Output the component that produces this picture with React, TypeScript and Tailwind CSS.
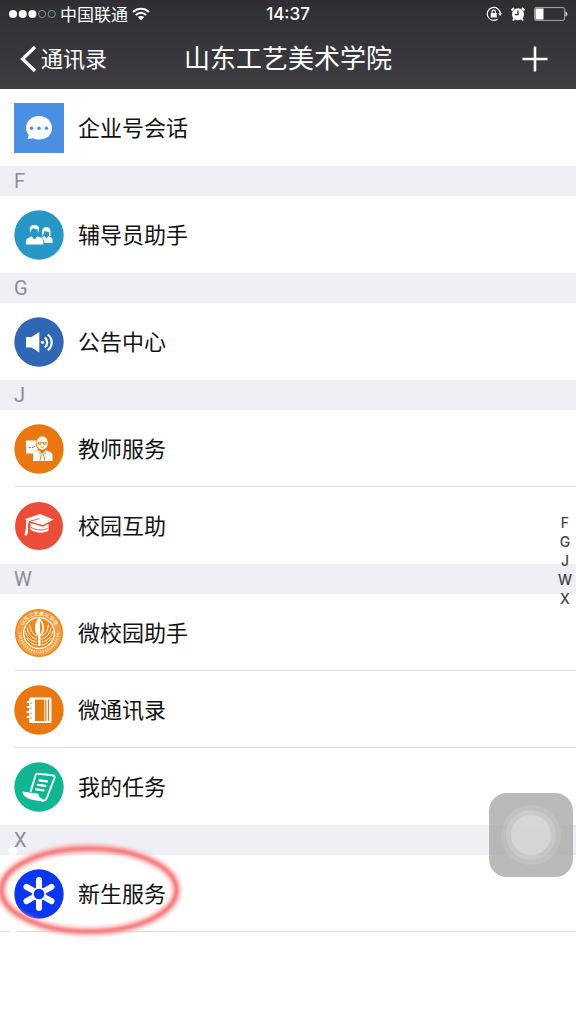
import type { ReactNode } from "react";

type Contact = {
  name: string;
  icon: ReactNode;
  highlighted?: boolean;
};

type Group = {
  letter?: string;
  contacts: Contact[];
};

const ChatIcon = () => (
  <svg viewBox="0 0 50 50" className="size-full" aria-hidden="true">
    <rect width="50" height="50" fill="#4a8fe2" />
    <path
      d="M25 13C32.5 13 38 18 38 25S32.5 36.500 25 36.500C22.500 36.500 20.500 36 18.800 35.200L13.500 36.300L14.800 32C13 30.200 12 27.800 12 25C12 18 17.500 13 25 13Z"
      fill="#fff"
    />
    <circle cx="17.500" cy="25.300" r="1.700" fill="#4a8fe2" />
    <circle cx="25" cy="25.300" r="1.700" fill="#4a8fe2" />
    <circle cx="32.500" cy="25.300" r="1.700" fill="#4a8fe2" />
  </svg>
);

const PeopleIcon = () => (
  <svg viewBox="0 0 50 50" className="size-full" aria-hidden="true">
    <circle cx="25" cy="25" r="24.700" fill="#2797c7" />
    <path
      d="M16 21C15 17.500 16.500 15 20.500 15C24.500 15 26 17.500 24.700 21L23.800 23V19.300C21.500 19.300 20 18.800 18.800 18.300C17.500 19 17 20 17 22.500Z"
      fill="#fff"
    />
    <path
      d="M12 34.500V31C12 28.500 15.500 27.800 17.500 26.300L20.500 29.500L23.500 26.300C26 27.500 29 28.300 29.300 31V34.500Z"
      fill="#fff"
    />
    <path
      d="M28 26V21.500C28 18.500 30 17 32.300 17C34.800 17 36.500 18.500 36.500 21.500V26H35V22C33 22 31.500 21.500 30.500 20.800C30.300 22 30 24.500 28 26Z"
      fill="#fff"
    />
    <path
      d="M26.800 27.500C28 27 29.500 26.800 30.300 26L32.500 28.500L34.700 26C36.500 27 38.500 27.500 38.500 30V33H30.500C30.500 30 29.300 28.500 26.800 27.500Z"
      fill="#fff"
    />
  </svg>
);

const SpeakerIcon = () => (
  <svg viewBox="0 0 50 50" className="size-full" aria-hidden="true">
    <circle cx="25" cy="25" r="24.700" fill="#2f67b4" />
    <path d="M12 20H17.500L25.300 15V35.500L17.500 30.500H12Z" fill="#fff" />
    <circle cx="28.500" cy="25.300" r="1.600" fill="#fff" />
    <path
      d="M30.800 20.300C34 23 34 28 30.800 30.500M33.800 17.500C39 22 39 29 33.800 33.300"
      fill="none"
      stroke="#fff"
      strokeWidth="2.200"
    />
  </svg>
);

const TeacherIcon = () => (
  <svg viewBox="0 0 50 50" className="size-full" aria-hidden="true">
    <circle cx="25" cy="25" r="24.700" fill="#ea7812" />
    <path d="M12 16.500H22.500L22 22L24 25L20 29.500H12Z" fill="#fff" />
    <path d="M14.500 23.500H17M18 23.500H19.500L21 22" fill="none" stroke="#ea7812" />
    <ellipse cx="28.300" cy="19" rx="5.600" ry="6.700" fill="#fff" />
    <path
      d="M23.700 18.700H33M24.500 18.700V20.300H27V18.700M29.500 18.700V20.300H32V18.700M26.500 23H30"
      fill="none"
      stroke="#ea7812"
      strokeWidth="0.900"
    />
    <path
      d="M19 37V31C19 28 22.500 27.500 24.500 26L28.300 30L32 26C34.500 27.500 38.500 28 38.500 31.500V37Z"
      fill="#fff"
    />
    <path
      d="M25 28.500L27.300 30.500L26 36.500M31.800 28.500L29.500 30.500L30.800 36.500"
      fill="none"
      stroke="#ea7812"
      strokeWidth="0.900"
    />
  </svg>
);

const CapIcon = () => (
  <svg viewBox="0 0 50 50" className="size-full" aria-hidden="true">
    <circle cx="25" cy="25" r="24" fill="#ec4d38" />
    <path d="M11 18L26 13L39.500 18.500L29 24L24 22.800L13.500 19.500Z" fill="#fff" />
    <path d="M25.500 17.500L15 20.500" stroke="#ec4d38" strokeWidth="0.900" />
    <path
      d="M12.300 19L15 20L13.700 24.500C14.700 28 13.800 31.500 13 34.500L10.500 34.200C11 31 12.300 28 12 24.500Z"
      fill="#fff"
    />
    <path
      d="M16.500 22L29 25.800L34.500 22.800V29.500C31 32.500 21 32.500 16.500 28.500Z"
      fill="#fff"
    />
    <path d="M17 26C21 29.500 30 30 34 27" fill="none" stroke="#ec4d38" strokeWidth="0.900" />
  </svg>
);

const CollegeLogo = () => (
  <svg viewBox="0 0 50 50" className="size-full" aria-hidden="true">
    <defs>
      <path id="seal-top" d="M7.500 25A17.500 17.500 0 0 1 42.500 25" />
    </defs>
    <circle cx="25" cy="25" r="23.300" fill="#f3a044" stroke="#ee8419" strokeWidth="1.400" />
    <path
      d="M6 25A19 19 0 0 0 44 25"
      fill="none"
      stroke="#fde3c4"
      strokeWidth="2.600"
      strokeDasharray="1.100 1.300"
    />
    <text fontSize="5" fill="#fff" fontFamily="Noto Sans CJK SC, sans-serif">
      <textPath href="#seal-top" startOffset="50%" textAnchor="middle">
        山东工艺美术学院
      </textPath>
    </text>
    <circle cx="25" cy="25" r="16" fill="#fff" />
    <circle cx="25" cy="25" r="14.700" fill="#f0871b" />
    <path
      d="M11 23C13 30 17 33 23 34M13 19.500C14.500 27 18 30 23 31M15.500 16.500C17 23.500 19 26.500 23 28M12.500 30C16 35 19 36.500 23 37M39 23C37 30 33 33 27.500 34M37 19.500C35.500 27 32 30 27.500 31M34.500 16.500C33.500 23.500 31 26.500 27.500 28M37.500 30C34 35 31.500 36.500 27.500 37"
      fill="none"
      stroke="#fff"
      strokeWidth="1"
    />
    <path d="M25 10C19.500 14 20 25 24 28V38H26.500V28C31.500 25 31.500 14 25 10Z" fill="#fff" />
    <path d="M26 13C29.300 16.500 29 23 26 26.500Z" fill="#f0871b" />
  </svg>
);

const NotebookIcon = () => (
  <svg viewBox="0 0 50 50" className="size-full" aria-hidden="true">
    <circle cx="25" cy="25" r="24.700" fill="#ea7812" />
    <rect x="15" y="12.500" width="22.500" height="25.500" rx="1.500" fill="#fff" />
    <rect x="21" y="14.500" width="9.300" height="21.500" fill="#ea7812" />
    <path d="M31.800 14.500V36M34.500 14.500V36" stroke="#ea7812" strokeWidth="1.200" />
    <path d="M15.500 17.500H18M15.500 22.500H18M15.500 27.500H18M15.500 32.500H18" stroke="#ea7812" strokeWidth="1.800" />
    <path
      d="M13.500 17H17M13.500 22H17M13.500 27H17M13.500 32H17"
      stroke="#fff"
      strokeWidth="1.800"
      strokeLinecap="round"
    />
  </svg>
);

const ScrollIcon = () => (
  <svg viewBox="0 0 50 50" className="size-full" aria-hidden="true">
    <circle cx="25" cy="25" r="24.700" fill="#10b694" />
    <path
      d="M16.500 30L21.500 13.500C22 12 22.700 11.500 24 11.700L38.500 13.200C40.500 13.500 41 14.500 40.500 16L33 35.500C32 38 30.500 39.300 27.500 38.500"
      fill="none"
      stroke="#fff"
      strokeWidth="1.900"
    />
    <path
      d="M8.500 29.500C14 30.500 19 31.300 24.500 31.800C24 34 25 35.500 28 36.500L29.500 39.500C21 38.500 14.500 37.300 11.500 35C9.500 33.500 8.500 31.500 8.500 29.500Z"
      fill="#fff"
    />
    <path
      d="M25.500 18.300L33 19.300M23.800 22.800L31.300 23.800M22 27.300L29.500 28.300"
      stroke="#fff"
      strokeWidth="2.200"
      strokeLinecap="round"
    />
  </svg>
);

const FlowerIcon = () => (
  <svg viewBox="0 0 50 50" className="size-full" aria-hidden="true">
    <circle cx="25" cy="25" r="24.700" fill="#0a37f0" />
    <path
      d="M25 11V18M25 32V39M12.500 17.800L19 21.500M31 28.500L37.500 32.200M12.500 32.200L19 28.500M31 21.500L37.500 17.800"
      stroke="#fff"
      strokeWidth="6"
      strokeLinecap="round"
    />
    <circle cx="25" cy="25" r="7" fill="#fff" />
    <circle cx="25" cy="25" r="5.300" fill="#0a37f0" />
  </svg>
);

const groups: Group[] = [
  { contacts: [{ name: "企业号会话", icon: <ChatIcon /> }] },
  { letter: "F", contacts: [{ name: "辅导员助手", icon: <PeopleIcon /> }] },
  { letter: "G", contacts: [{ name: "公告中心", icon: <SpeakerIcon /> }] },
  {
    letter: "J",
    contacts: [
      { name: "教师服务", icon: <TeacherIcon /> },
      { name: "校园互助", icon: <CapIcon /> },
    ],
  },
  {
    letter: "W",
    contacts: [
      { name: "微校园助手", icon: <CollegeLogo /> },
      { name: "微通讯录", icon: <NotebookIcon /> },
      { name: "我的任务", icon: <ScrollIcon /> },
    ],
  },
  { letter: "X", contacts: [{ name: "新生服务", icon: <FlowerIcon />, highlighted: true }] },
];

const StatusBar = () => (
  <div className="grid h-7 grid-cols-[1fr_auto_1fr] items-center px-2">
    <div className="flex items-center gap-1">
      <svg viewBox="0 0 48 10" className="h-[10px] w-12" aria-hidden="true">
        <circle cx="5" cy="5" r="4" fill="#fff" />
        <circle cx="14.700" cy="5" r="4" fill="#fff" />
        <circle cx="24.400" cy="5" r="4" fill="#fff" />
        <circle cx="34.100" cy="5" r="3.600" fill="none" stroke="#a5a5a8" strokeWidth="0.800" />
        <circle cx="43.800" cy="5" r="3.600" fill="none" stroke="#a5a5a8" strokeWidth="0.800" />
      </svg>
      <span className="text-[17px] leading-7">中国联通</span>
      <svg viewBox="0 0 18 14" className="h-[14px] w-[18px]" aria-hidden="true">
        <path
          d="M1 5C5.500 0.700 12.500 0.700 17 5M3.800 8C7 5.200 11 5.200 14.200 8"
          fill="none"
          stroke="#fff"
          strokeWidth="1.900"
        />
        <path d="M5.800 10C7.700 8.500 10.300 8.500 12.200 10L9 13.300Z" fill="#fff" />
      </svg>
    </div>
    <time className="font-[Inter,sans-serif] text-[17px] leading-7 font-medium">14:37</time>
    <div className="flex items-center justify-end gap-2">
      <svg viewBox="0 0 16 16" className="size-4" aria-hidden="true">
        <path
          d="M14.300 7.500A6.500 6.500 0 1 0 11.500 13.300"
          fill="none"
          stroke="#fff"
          strokeWidth="1.200"
        />
        <path d="M12 7.300H16L14.200 10Z" fill="#fff" />
        <rect x="4.700" y="7" width="6" height="4.500" fill="#fff" />
        <path d="M6 7.500V5.800A1.700 1.700 0 0 1 9.400 5.800V7.500" fill="none" stroke="#fff" strokeWidth="1.100" />
      </svg>
      <svg viewBox="0 0 16 16" className="size-4" aria-hidden="true">
        <circle cx="8" cy="8.300" r="6" fill="#fff" />
        <path d="M1.500 4.500L4 2M14.500 4.500L12 2M4.300 12.500L3 14.500M11.700 12.500L13 14.500" stroke="#fff" strokeWidth="1.900" />
        <path d="M8 4.500V8.700H5" fill="none" stroke="#323237" strokeWidth="1.300" />
      </svg>
      <svg viewBox="0 0 34 14" className="h-[14px] w-[34px]" aria-hidden="true">
        <rect x="0.600" y="0.600" width="30" height="12.800" rx="1.500" fill="none" stroke="#aaaaad" strokeWidth="1" />
        <rect x="1.500" y="1.500" width="8" height="11" fill="#fff" />
        <path d="M31.500 4.500C34 5 34 9 31.500 9.500Z" fill="#ddd" />
      </svg>
    </div>
  </div>
);

const ContactRow = ({ contact, last }: { contact: Contact; last: boolean }) => (
  <li className="relative">
    <a href="#" className="flex h-[77px] items-center pl-[14px]">
      <span className="size-[50px] shrink-0">{contact.icon}</span>
      <span className="flex-1 pb-1 pl-[14px] text-[22px] leading-8 text-[#111]">
        {contact.name}
      </span>
    </a>
    {!last && <div className="absolute right-0 bottom-0 left-[14px] h-px bg-[#e3e3e6]" />}
    {contact.highlighted && (
      <>
        <div className="absolute right-0 bottom-0 left-0 h-px bg-[#dcdcdf]" />
        <svg
          viewBox="0 0 190 100"
          className="pointer-events-none absolute -top-3 left-0 h-[100px] w-[190px] overflow-visible"
          aria-hidden="true"
        >
          <defs>
            <filter id="glow" x="-20%" y="-20%" width="140%" height="140%">
              <feGaussianBlur stdDeviation="2" />
            </filter>
            <filter id="core" x="-20%" y="-20%" width="140%" height="140%">
              <feGaussianBlur stdDeviation="0.800" />
            </filter>
          </defs>
          <circle cx="13" cy="8" r="4" fill="#fff" />
          <circle cx="13" cy="88" r="4" fill="#fff" />
          <ellipse
            cx="89"
            cy="47"
            rx="87.500"
            ry="41.500"
            fill="none"
            stroke="#fb9292"
            strokeWidth="7"
            filter="url(#glow)"
          />
          <ellipse
            cx="89"
            cy="47"
            rx="87.500"
            ry="41.500"
            fill="none"
            stroke="#f07070"
            strokeOpacity="0.800"
            strokeWidth="2.500"
            filter="url(#core)"
          />
        </svg>
      </>
    )}
  </li>
);

export default function App() {
  return (
    <div className="relative min-h-screen overflow-hidden bg-white font-['Noto_Sans_CJK_SC',sans-serif]">
      <header className="bg-linear-to-b from-[#2e2e33] to-[#3d3d42] text-white">
        <StatusBar />
        <div className="grid h-[61px] grid-cols-[1fr_auto_1fr] items-center px-5">
          <button type="button" className="flex items-center gap-1 justify-self-start">
            <svg viewBox="0 0 17 28" className="h-7 w-[17px]" aria-hidden="true">
              <path d="M15 2L2.500 14L15 26" fill="none" stroke="#fff" strokeWidth="3.200" />
            </svg>
            <span className="pb-1 text-[22px] leading-8">通讯录</span>
          </button>
          <h1 className="pb-1 text-[26px] leading-9 font-normal">山东工艺美术学院</h1>
          <button type="button" aria-label="添加" className="justify-self-end pr-2">
            <svg viewBox="0 0 26 26" className="size-[26px]" aria-hidden="true">
              <path d="M13 0.500V25.500M0.500 13H25.500" stroke="#fff" strokeWidth="2.600" />
            </svg>
          </button>
        </div>
      </header>

      <main>
        {groups.map((group) => (
          <section key={group.letter ?? "top"} id={group.letter}>
            {group.letter && (
              <h2 className="h-[30px] bg-[#efeff5] pl-[14px] font-[Roboto,sans-serif] text-[20px] leading-[30px] font-normal text-[#8e8e93]">
                {group.letter}
              </h2>
            )}
            <ul>
              {group.contacts.map((contact, i) => (
                <ContactRow
                  key={contact.name}
                  contact={contact}
                  last={i === group.contacts.length - 1}
                />
              ))}
            </ul>
          </section>
        ))}
      </main>

      <nav
        aria-label="索引"
        className="absolute top-[513px] right-0 flex w-[22px] flex-col text-center font-[Inter,sans-serif] text-[14px] leading-[19px] font-medium text-[#444]"
      >
        {groups.map(
          (group) =>
            group.letter && (
              <a key={group.letter} href={`#${group.letter}`}>
                {group.letter}
              </a>
            ),
        )}
      </nav>

      <button
        type="button"
        aria-label="辅助触控"
        className="absolute top-[793px] right-[3px] flex size-[84px] items-center justify-center rounded-[18px] bg-[#a9a9ab]/80"
      >
        <span className="flex size-[60px] items-center justify-center rounded-full bg-white/10">
          <span className="flex size-[50px] items-center justify-center rounded-full bg-white/15">
            <span className="size-10 rounded-full bg-white/25" />
          </span>
        </span>
      </button>
    </div>
  );
}
